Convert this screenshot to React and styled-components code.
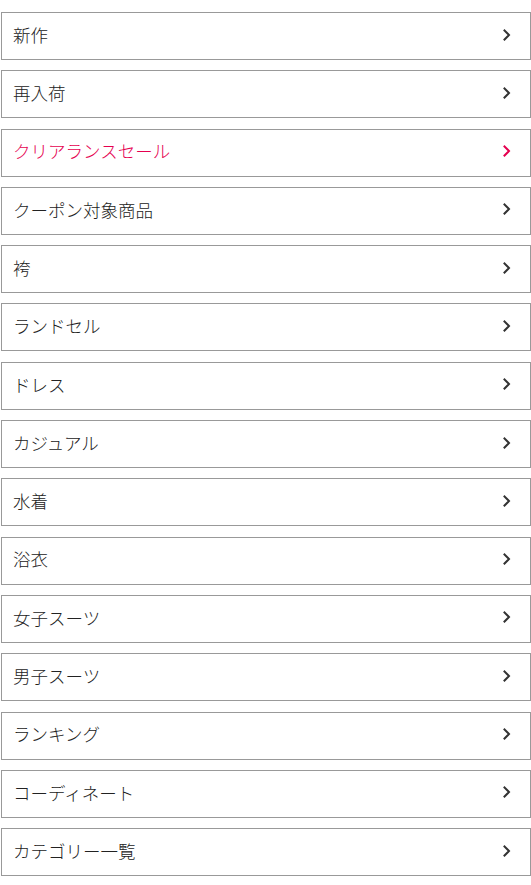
import React from "react";
import styled, { createGlobalStyle } from "styled-components";

const GlobalStyle = createGlobalStyle`
  html, body {
    margin: 0;
    padding: 0;
    background: #fff;
  }
  body {
    font-family: "Noto Sans CJK JP", "Noto Sans", sans-serif;
    color: #333;
  }
`;

const categories = [
  { label: "新作" },
  { label: "再入荷" },
  { label: "クリアランスセール", sale: true },
  { label: "クーポン対象商品" },
  { label: "袴" },
  { label: "ランドセル" },
  { label: "ドレス" },
  { label: "カジュアル" },
  { label: "水着" },
  { label: "浴衣" },
  { label: "女子スーツ" },
  { label: "男子スーツ" },
  { label: "ランキング" },
  { label: "コーディネート" },
  { label: "カテゴリー一覧" },
];

const MenuList = styled.ul`
  list-style: none;
  margin: 0;
  padding: 12px 0 0 1px;
  display: flex;
  flex-direction: column;
  gap: 10.3px;
`;

const MenuItem = styled.li`
  border: 1px solid #999;
  height: 48px;
  box-sizing: border-box;
`;

const MenuLink = styled.a`
  display: flex;
  align-items: center;
  justify-content: space-between;
  height: 100%;
  box-sizing: border-box;
  padding: 0 19px 3px 11px;
  font-size: 17.5px;
  font-weight: 300;
  line-height: 1;
  text-decoration: none;
  color: ${(props) => (props.$sale ? "#e5004f" : "#222")};
`;

const Chevron = styled.svg`
  width: 8px;
  height: 12px;
  flex-shrink: 0;
`;

const Arrow = ({ color }) => (
  <Chevron viewBox="0 0 8 12">
    <polyline
      points="1.5,1.5 6,6 1.5,10.5"
      fill="none"
      stroke={color}
      strokeWidth="2"
      strokeLinecap="square"
    />
  </Chevron>
);

const App = () => {
  return (
    <React.Fragment>
      <GlobalStyle />
      <nav>
        <MenuList>
          {categories.map((item) => (
            <MenuItem key={item.label}>
              <MenuLink href="#" $sale={item.sale}>
                <span>{item.label}</span>
                <Arrow color={item.sale ? "#e5004f" : "#333"} />
              </MenuLink>
            </MenuItem>
          ))}
        </MenuList>
      </nav>
    </React.Fragment>
  );
};

export default App;
